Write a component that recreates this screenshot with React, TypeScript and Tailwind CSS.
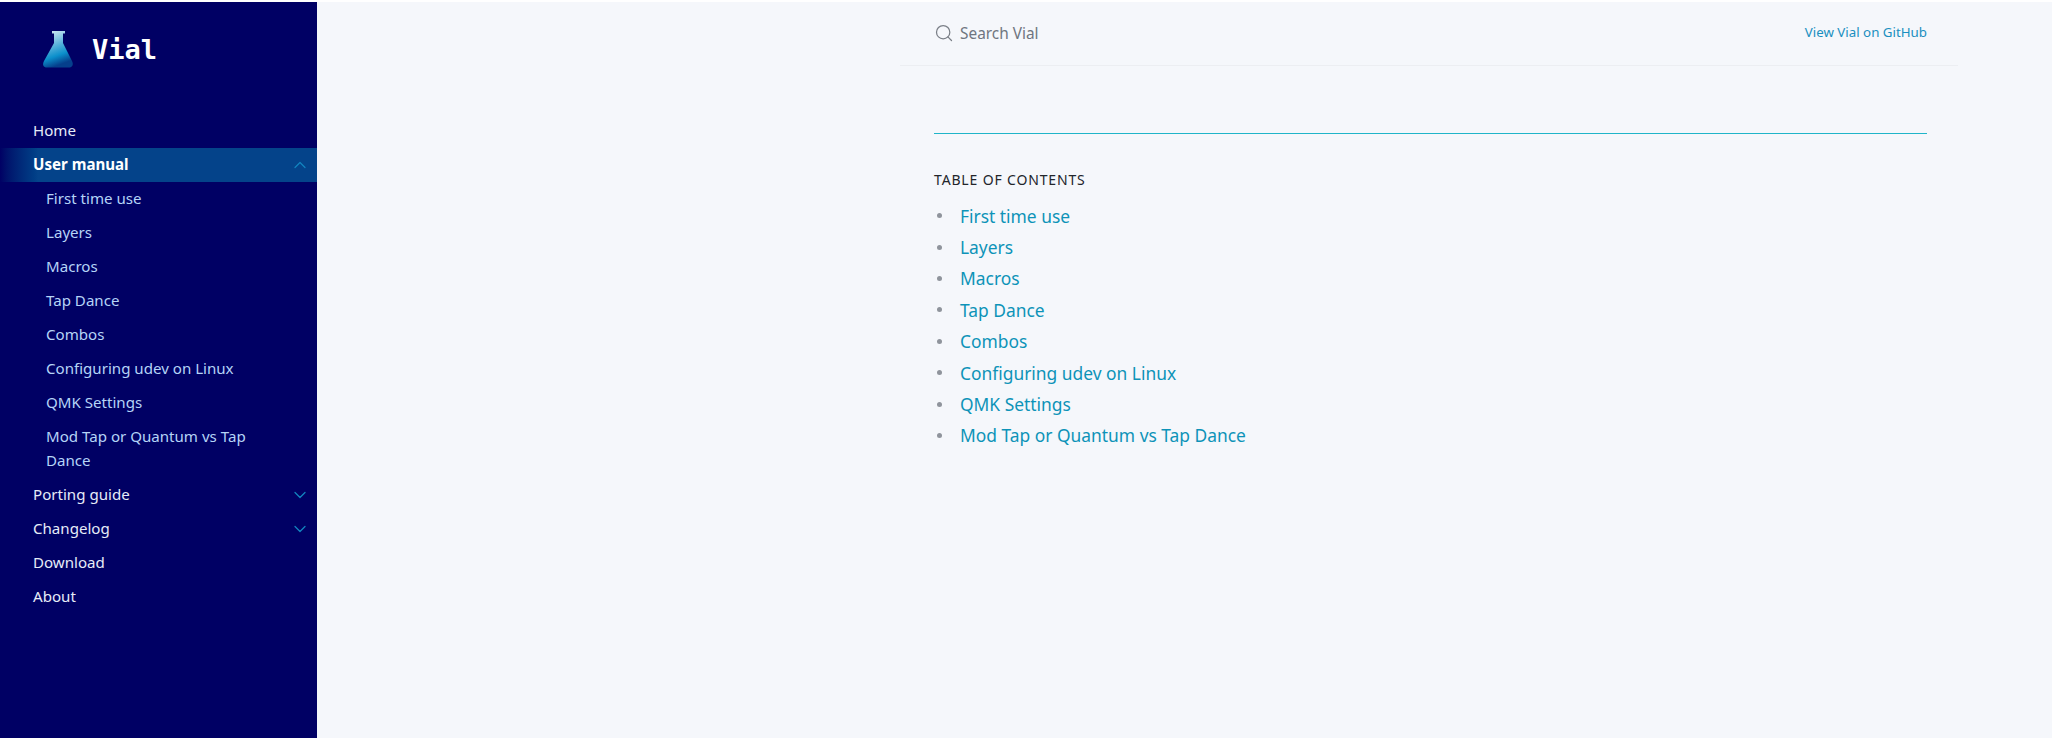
import { ChevronDown, ChevronUp, Search } from 'lucide-react';

const subItems = [
  'First time use',
  'Layers',
  'Macros',
  'Tap Dance',
  'Combos',
  'Configuring udev on Linux',
  'QMK Settings',
  'Mod Tap or Quantum vs Tap Dance',
];

function NavRow({ label, open }: { label: string; open?: boolean }) {
  return (
    <div className="flex h-[34px] items-center justify-between pl-[33px] pr-[7px] text-[#e6ecf8]">
      <span className="-translate-y-px">{label}</span>
      {open === false && <ChevronDown size={20} strokeWidth={1.5} className="text-[#1283bf]" />}
    </div>
  );
}

function FlaskLogo() {
  return (
    <svg width="34" height="40" viewBox="0 0 34 40" className="block">
      <defs>
        <linearGradient id="flask" x1="0" y1="0" x2="0.3" y2="1">
          <stop offset="0" stopColor="#e4f1f8" />
          <stop offset="0.45" stopColor="#5fb4dc" />
          <stop offset="0.75" stopColor="#0b8fcb" />
          <stop offset="1" stopColor="#053f8c" />
        </linearGradient>
      </defs>
      <path
        d="M11 1H24V3.5H22V13L31 31C33 35 31 37.500 28 37.500H6C2.500 37.500 1 35 3 31L13 13V3.500H11Z"
        fill="url(#flask)"
      />
    </svg>
  );
}

export default function App() {
  return (
    <div className="min-h-[738px] bg-white pt-[2px] font-['Noto_Sans',sans-serif]">
      <div className="flex h-[736px] bg-[#f5f7fb]">
        <aside className="w-[317px] shrink-0 overflow-hidden bg-[#000064] text-[15.1px]">
          <div className="flex h-[94px] items-start gap-[17px] pl-[41px] pt-[28px]">
            <FlaskLogo />
            <span className="mt-[5px] font-['DejaVu_Sans_Mono',monospace] text-[27px] font-bold leading-[30px] text-white">
              Vial
            </span>
          </div>
          <div className="pt-[18px]">
            <NavRow label="Home" />
            <div className="flex h-[34px] items-center justify-between bg-gradient-to-r from-[#000064] to-[#04438a] to-[12%] pl-[33px] pr-[7px] font-bold text-white">
              <span className="-translate-y-px">User manual</span>
              <ChevronUp size={20} strokeWidth={1.5} className="text-[#1283bf]" />
            </div>
            {subItems.map((item) => (
              <div key={item} className="py-[5px] pl-[46px] pr-[50px] leading-[24px] text-[#b5d4f7]">
                <span className="block -translate-y-px">{item}</span>
              </div>
            ))}
            <NavRow label="Porting guide" open={false} />
            <NavRow label="Changelog" open={false} />
            <NavRow label="Download" />
            <NavRow label="About" />
          </div>
        </aside>
        <main className="ml-[583px] w-[1058px] shrink-0">
          <header className="flex h-[64px] items-center justify-between border-b border-[#eceef2] pl-[34px] pr-[31px]">
            <div className="flex items-center gap-[6px] text-[15.4px] text-[#6f7580]">
              <Search size={20} strokeWidth={1.5} className="text-[#7a7f87]" />
              <span>Search Vial</span>
            </div>
            <a className="-translate-y-px text-[13.3px] text-[#1a8fc0]">View Vial on GitHub</a>
          </header>
          <div className="pl-[34px] pr-[31px] pt-[67px]">
            <div className="h-[1px] bg-[#1fb5c9]" />
            <div className="mt-[35px] text-[14px] tracking-[0.06em] text-[#22252b]">TABLE OF CONTENTS</div>
            <ul className="mt-[10px]">
              {subItems.map((item) => (
                <li key={item} className="flex h-[31.4px] items-center text-[17.4px] text-[#0d93b8]">
                  <span className="ml-[3px] mr-[18px] h-[5px] w-[5px] rounded-full bg-[#8f949c]" />
                  <span>{item}</span>
                </li>
              ))}
            </ul>
          </div>
        </main>
      </div>
    </div>
  );
}
